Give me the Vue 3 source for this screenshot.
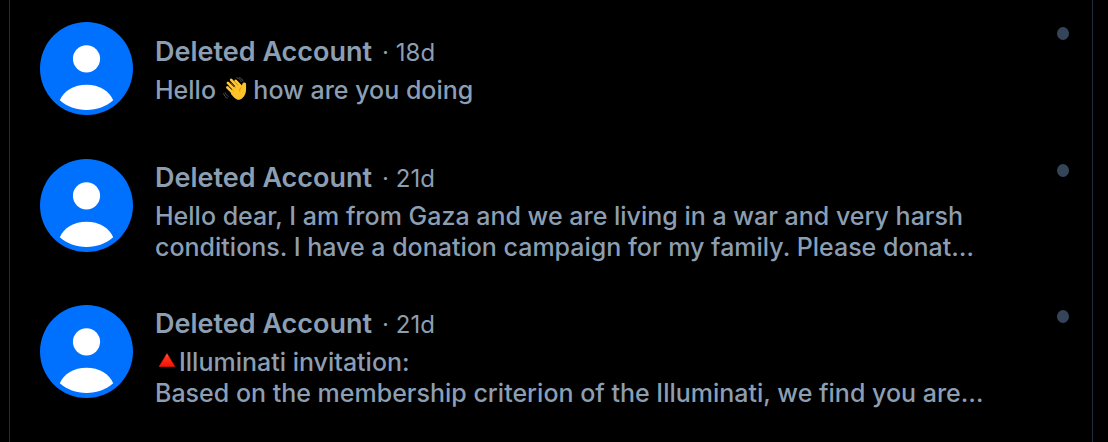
<script setup>
const conversations = [
  { id: 1, name: 'Deleted Account', age: '18d', before: 'Hello ', icon: 'wave', after: ' how are you doing' },
  {
    id: 2,
    name: 'Deleted Account',
    age: '21d',
    before: 'Hello dear, I am from Gaza and we are living in a war and very harsh\nconditions. I have a donation campaign for my family. Please donat…',
    icon: '',
    after: ''
  },
  {
    id: 3,
    name: 'Deleted Account',
    age: '21d',
    before: '',
    icon: 'triangle',
    after: 'Illuminati invitation:\nBased on the membership criterion of the Illuminati, we find you are…'
  }
]
</script>

<template>
  <main class="inbox">
    <ul class="list">
      <li v-for="c in conversations" :key="c.id">
        <a class="row" href="#">
          <svg class="avatar" viewBox="0 0 93 93" aria-hidden="true">
            <circle cx="46.5" cy="46.5" r="46.5" fill="#0070ff" />
            <circle cx="46.5" cy="36.8" r="13.6" fill="#fff" />
            <path d="M19.8 78.3C23.5 69 34 62.8 46.5 62.8S69.5 69 73.2 78.3C66 84.5 57 88 46.5 88S27 84.5 19.8 78.3Z" fill="#fff" />
          </svg>
          <div class="content">
            <div class="heading">
              <span class="name">{{ c.name }}</span>
              <span class="age">· {{ c.age }}</span>
            </div>
            <p class="message">{{ c.before }}<svg v-if="c.icon === 'wave'" class="emoji" viewBox="0 0 24 24" role="img" aria-label="Waving hand">
              <g stroke="#ffc83a" stroke-width="2.6" stroke-linecap="round" fill="none">
                <path d="M4.300 10.300L11 17M4.900 5.800L13 14M8.200 2.800L15.500 11M12.700 3.800L18 9.500" />
              </g>
              <path d="M8 15.500L9 12L15 7L18.500 10C19.200 8.500 18.800 6.800 20.300 5.800C21.800 5 23.200 6 23.100 7.600C22.900 10 23.500 12.500 22.700 15.500C21.500 20.500 17.500 23.500 14.500 22.700C12 22 10 19.500 8 17Z" fill="#ffc32a" />
              <g stroke="#c98512" stroke-width=".7" stroke-linecap="round" fill="none">
                <path d="M6 9.300L10.500 13.800M7.700 5.800L12.500 10.800M11.300 4.300L15 8.300M18.500 10C17 11.200 16.500 12.500 16.700 14" />
              </g>
              <g stroke="#565656" stroke-width=".9" stroke-linecap="round" fill="none">
                <path d="M.7 16.500C1.100 18.700 2.300 20.300 4.400 21.200M2.300 15.700C2.700 17.300 3.700 18.500 5.200 19.200M13.800 .8C16 1.100 17.700 2.500 18.300 4.700M16.500 .6C18.300 1.200 19.600 2.400 20 4" />
              </g>
            </svg><svg v-if="c.icon === 'triangle'" class="emoji" viewBox="0 0 24 24" role="img" aria-label="Red triangle">
              <defs>
                <linearGradient id="red-face" x1="0" y1="0" x2="0" y2="1">
                  <stop offset="0" stop-color="#ff8a70" />
                  <stop offset=".3" stop-color="#ff321c" />
                  <stop offset="1" stop-color="#f51500" />
                </linearGradient>
              </defs>
              <path d="M12 4.500L19.800 17.500H4.200Z" fill="url(#red-face)" stroke="#f01a08" stroke-width=".6" stroke-linejoin="round" />
            </svg>{{ c.after }}</p>
          </div>
          <span class="dot" aria-hidden="true"></span>
        </a>
      </li>
    </ul>
  </main>
</template>

<style>
html,
body {
  background: #000;
}
</style>

<style scoped>
.inbox {
  box-sizing: border-box;
  min-height: 100vh;
  margin: 0 15px 0 9px;
  border: solid #212d3b;
  border-width: 0 1px;
  font-family: Inter, "Liberation Sans", sans-serif;
  color: #8c9eb2;
}
.list {
  margin: 0;
  padding: 0;
  list-style: none;
}
.row {
  display: flex;
  gap: 22px;
  padding: 22px 23px 22px 30px;
  color: inherit;
  text-decoration: none;
}
.avatar {
  flex: none;
  width: 93px;
  height: 93px;
}
.content {
  flex: 1;
  min-width: 0;
  align-self: center;
  margin-bottom: -2px;
}
.heading {
  display: flex;
  align-items: baseline;
  gap: 10px;
  line-height: 37px;
}
.name {
  font-size: 27px;
  font-weight: 600;
}
.age {
  font-size: 24px;
}
.message {
  margin: 4px 0 0;
  font-size: 25px;
  font-weight: 500;
  line-height: 31px;
  white-space: pre-line;
}
.emoji {
  width: 24px;
  height: 24px;
  vertical-align: -2px;
}
.dot {
  flex: none;
  width: 12px;
  height: 13px;
  margin-top: 5px;
  border-radius: 50%;
  background: #344559;
}
</style>
